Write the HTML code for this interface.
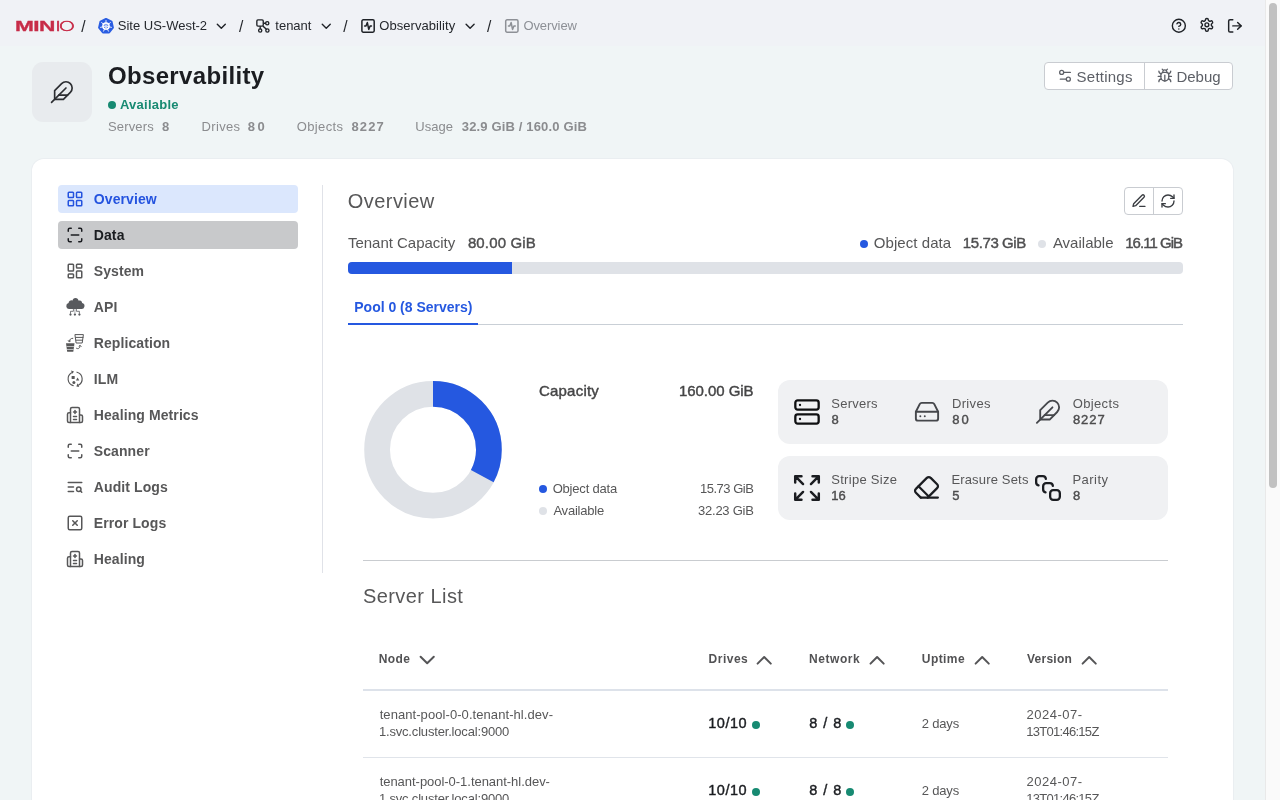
<!DOCTYPE html>
<html lang="en">
<head>
<meta charset="utf-8">
<title>Observability - Overview</title>
<style>
*{box-sizing:border-box;margin:0;padding:0}
html,body{width:1280px;height:800px;overflow:hidden}
body{background:#f0f5f6;font-family:"Liberation Sans",Arial,sans-serif;color:#1f2227;position:relative;font-size:13px}
.abs{position:absolute}
.t{position:absolute;white-space:pre}
svg{position:absolute;overflow:visible}
.k{fill:none;stroke:#1f2227;stroke-width:1.5;stroke-linecap:round;stroke-linejoin:round}
.g{fill:none;stroke:#55585e;stroke-width:1.5;stroke-linecap:round;stroke-linejoin:round}
#topbar{left:0;top:0;width:1265px;height:46px;background:#f0f2f6}
#sb{left:1265px;top:0;width:15px;height:800px;background:#fafafa;border-left:1px solid #e9e9e9}
#sbt{left:1269px;top:3px;width:8px;height:485px;border-radius:4px;background:#c1c1c1}
#hicon{left:32px;top:62px;width:60px;height:60px;border-radius:11px;background:#e8ebee}
#btns{left:1044px;top:62px;width:189px;height:28px;border:1px solid #c9ccd1;border-radius:4px;background:#fff}
#btns i{position:absolute;left:99px;top:0;width:1px;height:26px;background:#c9ccd1}
#card{left:32px;top:159px;width:1201px;height:700px;border-radius:12px;background:#fff;box-shadow:0 0 0 1px #eaeef1}
.nav{left:58px;width:240px;height:28px;border-radius:4px}
.dot{position:absolute;width:8px;height:8px;border-radius:50%}
.sc{left:778px;width:390px;height:64px;border-radius:12px;background:#f0f1f3}
.hl{position:absolute;height:1px}
.lg{color:#c72c48;transform-origin:0 0;-webkit-text-stroke:.3px #c72c48}
.lg2{-webkit-text-stroke:.55px #c72c48}
</style>
</head>
<body>
<div id="root" style="position:absolute;left:0;top:0;width:1280px;height:800px;will-change:transform">
<div id="topbar" class="abs"></div>
<div id="sb" class="abs"></div><div id="sbt" class="abs"></div>
<div id="hicon" class="abs"></div>
<div class="dot" style="left:108px;top:100.7px;background:#178a72"></div>
<div id="btns" class="abs"><i></i></div>
<div id="card" class="abs"></div>
<div class="abs nav" style="top:185px;background:#dbe7fd"></div>
<div class="abs nav" style="top:221px;background:#c8c9cb"></div>
<div class="abs" style="left:322px;top:185px;width:1px;height:388px;background:#e0e2e8"></div>

<!-- overview tools -->
<div class="abs" style="left:1124px;top:187px;width:59px;height:28px;border:1px solid #c9ccd1;border-radius:4px;background:#fff"></div>
<div class="abs" style="left:1153px;top:188px;width:1px;height:26px;background:#c9ccd1"></div>
<!-- capacity bar -->
<div class="abs" style="left:348px;top:262px;width:835px;height:12px;border-radius:4px;background:#dfe2e7"></div>
<div class="abs" style="left:348px;top:262px;width:164px;height:12px;border-radius:4px 0 0 4px;background:#2558e0"></div>
<div class="dot" style="left:860px;top:240px;background:#2558e0"></div>
<div class="dot" style="left:1038px;top:240px;background:#dfe2e7"></div>
<!-- tabs -->
<div class="hl" style="left:348px;top:324px;width:835px;background:#c9cfd6"></div>
<div class="abs" style="left:348px;top:323px;width:130px;height:2px;background:#2558e0"></div>
<!-- donut -->
<svg style="left:353px;top:370px" width="160" height="160" viewBox="353 370 160 160">
<circle cx="433" cy="449.75" r="55.9" fill="none" stroke="#dfe2e7" stroke-width="25.75"/>
<circle cx="433" cy="449.75" r="55.9" fill="none" stroke="#2558e0" stroke-width="25.75" stroke-dasharray="115.2 400" transform="rotate(-90 433 449.75)"/>
</svg>
<div class="dot" style="left:539px;top:485px;background:#2558e0"></div>
<div class="dot" style="left:539px;top:507px;background:#dfe2e7"></div>
<!-- stat cards -->
<div class="abs sc" style="top:380px"></div>
<div class="abs sc" style="top:456px"></div>
<div class="hl" style="left:363px;top:560px;width:805px;background:#c9ccd0"></div>
<!-- table -->
<div class="abs" style="left:363px;top:689px;width:805px;height:2px;background:#dde2ea"></div>
<div class="hl" style="left:363px;top:757px;width:805px;background:#e0e4ea"></div>
<div class="dot" style="left:752px;top:721px;background:#178a72"></div>
<div class="dot" style="left:846px;top:721px;background:#178a72"></div>
<div class="dot" style="left:752px;top:788px;background:#178a72"></div>
<div class="dot" style="left:846px;top:788px;background:#178a72"></div>

<!-- logo -->
<div id="logo" class="abs" title="MINIO" style="left:0;top:0;width:80px;height:46px"><span class="t lg" style="left:14.7px;top:19.1px;font-size:14.64px;line-height:14.64px;font-weight:700;letter-spacing:-.4px;transform:scaleX(1.55)">MIN</span><span class="t lg lg2" style="left:54.7px;top:19.0px;font-size:14px;line-height:14px;font-family:'DejaVu Sans',sans-serif;font-weight:200;letter-spacing:-1.85px;transform:scaleX(1.52)">IO</span></div>
<svg style="left:0;top:0" width="1" height="1"><polygon points="106.00,19.10 111.47,21.74 112.82,27.66 109.04,32.41 102.96,32.41 99.18,27.66 100.53,21.74" fill="#2a5de2" stroke="#2a5de2" stroke-width="2.2" stroke-linejoin="round"/><circle cx="106" cy="26.1" r="3.1" fill="none" stroke="#fff" stroke-width="1.5"/><line x1="106.00" y1="24.90" x2="106.00" y2="20.50" stroke="#fff" stroke-width="0.9" stroke-linecap="round"/><line x1="106.94" y1="25.35" x2="110.38" y2="22.61" stroke="#fff" stroke-width="0.9" stroke-linecap="round"/><line x1="107.17" y1="26.37" x2="111.46" y2="27.35" stroke="#fff" stroke-width="0.9" stroke-linecap="round"/><line x1="106.52" y1="27.18" x2="108.43" y2="31.15" stroke="#fff" stroke-width="0.9" stroke-linecap="round"/><line x1="105.48" y1="27.18" x2="103.57" y2="31.15" stroke="#fff" stroke-width="0.9" stroke-linecap="round"/><line x1="104.83" y1="26.37" x2="100.54" y2="27.35" stroke="#fff" stroke-width="0.9" stroke-linecap="round"/><line x1="105.06" y1="25.35" x2="101.62" y2="22.61" stroke="#fff" stroke-width="0.9" stroke-linecap="round"/><circle cx="106" cy="26.1" r="0.9" fill="#fff"/></svg>
<svg style="left:0;top:0" width="1" height="1"><g fill="none" stroke="#1f2227" stroke-width="1.35" stroke-linecap="round" stroke-linejoin="round"><rect x="256.85" y="19.8" width="6.4" height="6.25" rx="1.1"/><circle cx="267.25" cy="23.2" r="1.6"/><circle cx="260.2" cy="30.5" r="1.6"/><circle cx="267.4" cy="30.5" r="1.6"/><path d="M263.9 23.2h1.6"/><path d="M260.2 26.7v2"/><path d="M263.4 26.4l2.7 2.7"/></g></svg>
<svg style="left:0;top:0" width="1" height="1"><g transform="translate(213.30 18.25) scale(0.6667)" fill="none" stroke="#1f2227" stroke-width="2.100" stroke-linecap="round" stroke-linejoin="round"><path d="m6 9 6 6 6-6"/></g></svg>
<svg style="left:0;top:0" width="1" height="1"><g transform="translate(318.25 18.25) scale(0.6667)" fill="none" stroke="#1f2227" stroke-width="2.100" stroke-linecap="round" stroke-linejoin="round"><path d="m6 9 6 6 6-6"/></g></svg>
<svg style="left:0;top:0" width="1" height="1"><g transform="translate(462.10 18.25) scale(0.6667)" fill="none" stroke="#1f2227" stroke-width="2.100" stroke-linecap="round" stroke-linejoin="round"><path d="m6 9 6 6 6-6"/></g></svg>
<svg style="left:0;top:0" width="1" height="1"><g transform="translate(359.85 17.80) scale(0.6833)" fill="none" stroke="#1f2227" stroke-width="2.195" stroke-linecap="round" stroke-linejoin="round"><rect width="18" height="18" x="3" y="3" rx="2"/><path d="M17 12h-2l-2 5-2-10-2 5H7"/></g></svg>
<svg style="left:0;top:0" width="1" height="1"><g transform="translate(503.65 17.80) scale(0.6833)" fill="none" stroke="#8d9096" stroke-width="2.195" stroke-linecap="round" stroke-linejoin="round"><rect width="18" height="18" x="3" y="3" rx="2"/><path d="M17 12h-2l-2 5-2-10-2 5H7"/></g></svg>
<svg style="left:0;top:0" width="1" height="1"><g transform="translate(1171.05 17.95) scale(0.6500)" fill="none" stroke="#1f2227" stroke-width="2.154" stroke-linecap="round" stroke-linejoin="round"><circle cx="12" cy="12" r="10"/><path d="M9.09 9a3 3 0 0 1 5.83 1c0 2-3 3-3 3"/><path d="M12 17h.01"/></g></svg>
<svg style="left:0;top:0" width="1" height="1"><g transform="translate(1199.20 17.15) scale(0.6400)" fill="none" stroke="#1f2227" stroke-width="2.188" stroke-linecap="round" stroke-linejoin="round"><path d="M12.22 2h-.44a2 2 0 0 0-2 2v.18a2 2 0 0 1-1 1.73l-.43.25a2 2 0 0 1-2 0l-.15-.08a2 2 0 0 0-2.73.73l-.22.38a2 2 0 0 0 .73 2.73l.15.1a2 2 0 0 1 1 1.72v.51a2 2 0 0 1-1 1.74l-.15.09a2 2 0 0 0-.73 2.73l.22.38a2 2 0 0 0 2.73.73l.15-.08a2 2 0 0 1 2 0l.43.25a2 2 0 0 1 1 1.73V20a2 2 0 0 0 2 2h.44a2 2 0 0 0 2-2v-.18a2 2 0 0 1 1-1.73l.43-.25a2 2 0 0 1 2 0l.15.08a2 2 0 0 0 2.73-.73l.22-.39a2 2 0 0 0-.73-2.73l-.15-.08a2 2 0 0 1-1-1.74v-.5a2 2 0 0 1 1-1.74l.15-.09a2 2 0 0 0 .73-2.73l-.22-.38a2 2 0 0 0-2.73-.73l-.15.08a2 2 0 0 1-2 0l-.43-.25a2 2 0 0 1-1-1.73V4a2 2 0 0 0-2-2z"/><circle cx="12" cy="12" r="3"/></g></svg>
<svg style="left:0;top:0" width="1" height="1"><g transform="translate(1226.60 17.60) scale(0.6900)" fill="none" stroke="#1f2227" stroke-width="2.101" stroke-linecap="round" stroke-linejoin="round"><path d="M9 21H5a2 2 0 0 1-2-2V5a2 2 0 0 1 2-2h4"/><path d="m16 17 5-5-5-5"/><path d="M21 12H9"/></g></svg>
<svg style="left:0;top:0" width="1" height="1"><g transform="translate(49.50 79.74) scale(1.0300)" fill="none" stroke="#2b2d31" stroke-width="1.602" stroke-linecap="round" stroke-linejoin="round"><path d="M20.24 12.24a6 6 0 0 0-8.49-8.49L5 10.5V19h8.5z"/><path d="M16 8 2 22"/><path d="M17.5 15H9"/></g></svg>
<svg style="left:0;top:0" width="1" height="1"><g transform="translate(1057.00 67.80) scale(0.6667)" fill="none" stroke="#5d6067" stroke-width="1.950" stroke-linecap="round" stroke-linejoin="round"><path d="M20 7h-9"/><path d="M14 17H5"/><circle cx="17" cy="17" r="3"/><circle cx="7" cy="7" r="3"/></g></svg>
<svg style="left:0;top:0" width="1" height="1"><g transform="translate(1156.90 67.80) scale(0.6600)" fill="none" stroke="#5d6067" stroke-width="1.970" stroke-linecap="round" stroke-linejoin="round"><path d="m8 2 1.88 1.88"/><path d="M14.12 3.88 16 2"/><path d="M9 7.13v-1a3.003 3.003 0 1 1 6 0v1"/><path d="M12 20c-3.3 0-6-2.7-6-6v-3a4 4 0 0 1 4-4h4a4 4 0 0 1 4 4v3c0 3.3-2.7 6-6 6"/><path d="M12 20v-9"/><path d="M6.53 9C4.6 8.8 3 7.1 3 5"/><path d="M6 13H2"/><path d="M3 21c0-2.1 1.7-3.9 3.8-4"/><path d="M20.97 5c0 2.1-1.6 3.8-3.5 4"/><path d="M22 13h-4"/><path d="M17.2 17c2.1.1 3.8 1.9 3.8 4"/></g></svg>
<svg style="left:0;top:0" width="1" height="1"><g transform="translate(1131.00 193.00) scale(0.6667)" fill="none" stroke="#3a3d42" stroke-width="2.025" stroke-linecap="round" stroke-linejoin="round"><path d="M13 20h8"/><path d="M16.5 3.5a2.12 2.12 0 0 1 3 3L7 19l-4 1 1-4Z"/></g></svg>
<svg style="left:0;top:0" width="1" height="1"><g transform="translate(1160.00 193.00) scale(0.6667)" fill="none" stroke="#3a3d42" stroke-width="2.025" stroke-linecap="round" stroke-linejoin="round"><path d="M3 12a9 9 0 0 1 9-9 9.75 9.75 0 0 1 6.74 2.74L21 8"/><path d="M21 3v5h-5"/><path d="M21 12a9 9 0 0 1-9 9 9.75 9.75 0 0 1-6.74-2.74L3 16"/><path d="M8 16H3v5"/></g></svg>
<svg style="left:0;top:0" width="1" height="1"><g transform="translate(66.00 190.00) scale(0.7500)" fill="none" stroke="#2453df" stroke-width="2.000" stroke-linecap="round" stroke-linejoin="round"><rect width="7" height="7" x="3" y="3" rx="1"/><rect width="7" height="7" x="14" y="3" rx="1"/><rect width="7" height="7" x="14" y="14" rx="1"/><rect width="7" height="7" x="3" y="14" rx="1"/></g></svg>
<svg style="left:0;top:0" width="1" height="1"><g transform="translate(66.00 226.00) scale(0.7500)" fill="none" stroke="#1a1c20" stroke-width="2.000" stroke-linecap="round" stroke-linejoin="round"><path d="M3 7V5a2 2 0 0 1 2-2h2"/><path d="M17 3h2a2 2 0 0 1 2 2v2"/><path d="M21 17v2a2 2 0 0 1-2 2h-2"/><path d="M7 21H5a2 2 0 0 1-2-2v-2"/><path d="M7 12h10"/></g></svg>
<svg style="left:0;top:0" width="1" height="1"><g transform="translate(66.00 262.00) scale(0.7500)" fill="none" stroke="#575758" stroke-width="2.000" stroke-linecap="round" stroke-linejoin="round"><rect width="7" height="9" x="3" y="3" rx="1"/><rect width="7" height="5" x="14" y="3" rx="1"/><rect width="7" height="9" x="14" y="12" rx="1"/><rect width="7" height="5" x="3" y="16" rx="1"/></g></svg>
<svg style="left:0;top:0" width="1" height="1"><g transform="translate(66.00 406.00) scale(0.7500)" fill="none" stroke="#575758" stroke-width="2.000" stroke-linecap="round" stroke-linejoin="round"><path d="M12 6v4"/><path d="M14 14h-4"/><path d="M14 18h-4"/><path d="M14 8h-4"/><path d="M18 12h2a2 2 0 0 1 2 2v6a2 2 0 0 1-2 2H4a2 2 0 0 1-2-2v-9a2 2 0 0 1 2-2h2"/><path d="M18 22V4a2 2 0 0 0-2-2H8a2 2 0 0 0-2 2v18"/></g></svg>
<svg style="left:0;top:0" width="1" height="1"><g transform="translate(66.00 442.00) scale(0.7500)" fill="none" stroke="#575758" stroke-width="2.000" stroke-linecap="round" stroke-linejoin="round"><path d="M3 7V5a2 2 0 0 1 2-2h2"/><path d="M17 3h2a2 2 0 0 1 2 2v2"/><path d="M21 17v2a2 2 0 0 1-2 2h-2"/><path d="M7 21H5a2 2 0 0 1-2-2v-2"/><path d="M7 12h10"/></g></svg>
<svg style="left:0;top:0" width="1" height="1"><g transform="translate(66.00 478.00) scale(0.7500)" fill="none" stroke="#575758" stroke-width="2.000" stroke-linecap="round" stroke-linejoin="round"><path d="M21 6H3"/><path d="M10 12H3"/><path d="M10 18H3"/><circle cx="17" cy="15" r="3"/><path d="m21 19-1.9-1.9"/></g></svg>
<svg style="left:0;top:0" width="1" height="1"><g transform="translate(66.00 514.00) scale(0.7500)" fill="none" stroke="#575758" stroke-width="2.000" stroke-linecap="round" stroke-linejoin="round"><rect width="18" height="18" x="3" y="3" rx="2" ry="2"/><path d="m15 9-6 6"/><path d="m9 9 6 6"/></g></svg>
<svg style="left:0;top:0" width="1" height="1"><g transform="translate(66.00 550.00) scale(0.7500)" fill="none" stroke="#575758" stroke-width="2.000" stroke-linecap="round" stroke-linejoin="round"><path d="M12 6v4"/><path d="M14 14h-4"/><path d="M14 18h-4"/><path d="M14 8h-4"/><path d="M18 12h2a2 2 0 0 1 2 2v6a2 2 0 0 1-2 2H4a2 2 0 0 1-2-2v-9a2 2 0 0 1 2-2h2"/><path d="M18 22V4a2 2 0 0 0-2-2H8a2 2 0 0 0-2 2v18"/></g></svg>
<svg style="left:0;top:0" width="1" height="1"><g fill="#585a5e" stroke="none"><path d="M68.9 309 a3 3 0 0 1 -0.3 -5.9 a2.7 2.7 0 0 1 4 -2.5 a2.91 2.91 0 0 1 5.8 0 a2.7 2.7 0 0 1 3.7 2.5 a3 3 0 0 1 -1.3 5.9 z"/><circle cx="70.5" cy="314.6" r="1.15"/><circle cx="74.9" cy="314.6" r="1.15"/><circle cx="79.4" cy="314.6" r="1.15"/></g><g fill="none" stroke="#585a5e" stroke-width="0.8"><path d="M73.4 309v2.3h-2.9v2.5"/><path d="M76.4 309v2.3h3v2.5"/><path d="M74.9 309v5" stroke="#9a9c9f"/></g></svg>
<svg style="left:0;top:0" width="1" height="1"><g fill="none" stroke="#575758" stroke-width="1" stroke-linecap="round" stroke-linejoin="round"><path d="M75.3 334.6h8.1l-1.2 8.4h-5.7z"/><path d="M75.7 337.4h7.3"/><path d="M76.1 340.2h6.5"/><path d="M72.8 338.3c-2 0-3.2 1-3.6 3"/><path d="M68.3 340.6l.9 1.2 1.3-.8"/><path d="M76.5 348.3c1.8 1 3.4 .2 3.6-2.6"/><path d="M79 346.3l1.1-.9 1 1"/></g><g fill="#575758"><path d="M66 343.2h8.5l-1.2 8.6h-6.1z"/></g><g stroke="#e4e5e7" stroke-width="0.7"><path d="M66.5 346.5h7.6"/><path d="M67 349.5h6.7"/></g></svg>
<svg style="left:0;top:0" width="1" height="1"><g fill="none" stroke="#575758" stroke-width="1.15" stroke-linecap="round" stroke-linejoin="round"><path d="M73.2 385.6a7 7 0 0 1 -1.6 -12.8"/><path d="M77 372.2a7 7 0 0 1 1.3 13"/></g><g fill="#575758"><path d="M71 370.4l3 1-1.6 2.3z"/><path d="M79.2 386.9l-2.8-.5 1-3.2z"/><rect x="71.6" y="376" width="3.1" height="2.9" rx=".3"/><path d="M77.6 377.6l1.7 3h-3.4z"/><circle cx="73.9" cy="382.5" r="1.5"/></g></svg>
<svg style="left:0;top:0" width="1" height="1"><g transform="translate(793.00 398.00) scale(1.1667)" fill="none" stroke="#0f1012" stroke-width="1.971" stroke-linecap="round" stroke-linejoin="round"><rect width="20" height="8" x="2" y="2" rx="2" ry="2"/><rect width="20" height="8" x="2" y="14" rx="2" ry="2"/><path d="M6 6h.01"/><path d="M6 18h.01"/></g></svg>
<svg style="left:0;top:0" width="1" height="1"><g transform="translate(913.65 398.38) scale(1.1125)" fill="none" stroke="#45474b" stroke-width="1.708" stroke-linecap="round" stroke-linejoin="round"><path d="M22 12H2"/><path d="M5.45 5.11 2 12v6a2 2 0 0 0 2 2h16a2 2 0 0 0 2-2v-6l-3.45-6.89A2 2 0 0 0 16.76 4H7.24a2 2 0 0 0-1.79 1.11z"/><path d="M6 16h.01"/><path d="M10 16h.01"/></g></svg>
<svg style="left:0;top:0" width="1" height="1"><g transform="translate(1034.65 398.40) scale(1.1125)" fill="none" stroke="#45474b" stroke-width="1.663" stroke-linecap="round" stroke-linejoin="round"><path d="M20.24 12.24a6 6 0 0 0-8.49-8.49L5 10.5V19h8.5z"/><path d="M16 8 2 22"/><path d="M17.5 15H9"/></g></svg>
<svg style="left:0;top:0" width="1" height="1"><g transform="translate(791.27 472.27) scale(1.3111)" fill="none" stroke="#1b1d21" stroke-width="1.869" stroke-linecap="round" stroke-linejoin="round"><path d="m21 21-6-6m6 6v-4.8m0 4.8h-4.8"/><path d="M3 16.2V21m0 0h4.8M3 21l6-6"/><path d="M21 7.8V3m0 0h-4.8M21 3l-6 6"/><path d="M3 7.8V3m0 0h4.8M3 3l6 6"/></g></svg>
<svg style="left:0;top:0" width="1" height="1"><g transform="translate(912.82 473.68) scale(1.1400)" fill="none" stroke="#1b1d21" stroke-width="1.974" stroke-linecap="round" stroke-linejoin="round"><path d="m7 21-4.3-4.3c-1-1-1-2.5 0-3.4l9.6-9.6c1-1 2.5-1 3.4 0l5.6 5.6c1 1 1 2.5 0 3.4L13 21"/><path d="M22 21H7"/><path d="m5 11 9 9"/></g></svg>
<svg style="left:0;top:0" width="1" height="1"><g fill="none" stroke="#1b1d21" stroke-width="2.3" stroke-linecap="round" stroke-linejoin="round"><path d="M1045.8500000000001 478.95 A3 3 0 0 0 1042.8500000000001 476.15 H1039.15 A3 3 0 0 0 1036.15 479.15 V482.24999999999994 A3 3 0 0 0 1038.5500000000002 485.34999999999997"/><path d="M1052.8500000000001 485.95 A3 3 0 0 0 1049.8500000000001 483.15 H1046.15 A3 3 0 0 0 1043.15 486.15 V489.24999999999994 A3 3 0 0 0 1045.5500000000002 492.34999999999997"/><rect x="1050.15" y="490.15" width="9.7" height="9.7" rx="3"/></g></svg>
<svg style="left:0;top:0" width="1" height="1"><g transform="translate(414.00 646.80) scale(1.1000)" fill="none" stroke="#555557" stroke-width="1.818" stroke-linecap="round" stroke-linejoin="round"><path d="m6 9 6 6 6-6"/></g></svg>
<svg style="left:0;top:0" width="1" height="1"><g transform="translate(751.00 647.10) scale(1.1000)" fill="none" stroke="#555557" stroke-width="1.818" stroke-linecap="round" stroke-linejoin="round"><path d="m18 15-6-6-6 6"/></g></svg>
<svg style="left:0;top:0" width="1" height="1"><g transform="translate(863.90 647.10) scale(1.1000)" fill="none" stroke="#555557" stroke-width="1.818" stroke-linecap="round" stroke-linejoin="round"><path d="m18 15-6-6-6 6"/></g></svg>
<svg style="left:0;top:0" width="1" height="1"><g transform="translate(969.00 647.10) scale(1.1000)" fill="none" stroke="#555557" stroke-width="1.818" stroke-linecap="round" stroke-linejoin="round"><path d="m18 15-6-6-6 6"/></g></svg>
<svg style="left:0;top:0" width="1" height="1"><g transform="translate(1076.00 647.10) scale(1.1000)" fill="none" stroke="#555557" stroke-width="1.818" stroke-linecap="round" stroke-linejoin="round"><path d="m18 15-6-6-6 6"/></g></svg>
<div class="t" style="left:117.75px;top:19.1px;font-size:13px;line-height:13px;font-weight:400;color:#25282d;">Site US-West-2</div>
<div class="t" style="left:275.35px;top:19.1px;font-size:13px;line-height:13px;font-weight:400;color:#25282d;letter-spacing:-0.030px;">tenant</div>
<div class="t" style="left:379.25px;top:19.1px;font-size:13px;line-height:13px;font-weight:400;color:#25282d;letter-spacing:0.062px;">Observability</div>
<div class="t" style="left:523.45px;top:19.1px;font-size:13px;line-height:13px;font-weight:400;color:#8d9096;letter-spacing:-0.100px;">Overview</div>
<div class="t" style="left:81.30px;top:19.0px;font-size:15.6px;line-height:15.6px;font-weight:400;color:#25282d;">/</div>
<div class="t" style="left:239.00px;top:19.0px;font-size:15.6px;line-height:15.6px;font-weight:400;color:#25282d;">/</div>
<div class="t" style="left:343.20px;top:19.0px;font-size:15.6px;line-height:15.6px;font-weight:400;color:#25282d;">/</div>
<div class="t" style="left:487.10px;top:19.0px;font-size:15.6px;line-height:15.6px;font-weight:400;color:#25282d;">/</div>
<div class="t" style="left:107.90px;top:64.0px;font-size:24px;line-height:24px;font-weight:700;color:#1b1d21;letter-spacing:0.354px;">Observability</div>
<div class="t" style="left:119.95px;top:98.1px;font-size:13px;line-height:13px;font-weight:700;color:#178a72;letter-spacing:0.250px;">Available</div>
<div class="t" style="left:107.95px;top:120.1px;font-size:13px;line-height:13px;font-weight:400;color:#8b8c8f;letter-spacing:0.167px;">Servers</div>
<div class="t" style="left:162.00px;top:120.1px;font-size:13px;line-height:13px;font-weight:700;color:#8b8c8f;">8</div>
<div class="t" style="left:201.50px;top:120.1px;font-size:13px;line-height:13px;font-weight:400;color:#8b8c8f;letter-spacing:0.350px;">Drives</div>
<div class="t" style="left:247.70px;top:120.1px;font-size:13px;line-height:13px;font-weight:700;color:#8b8c8f;letter-spacing:2.500px;">80</div>
<div class="t" style="left:296.75px;top:120.1px;font-size:13px;line-height:13px;font-weight:400;color:#8b8c8f;letter-spacing:0.375px;">Objects</div>
<div class="t" style="left:351.50px;top:120.1px;font-size:13px;line-height:13px;font-weight:700;color:#8b8c8f;letter-spacing:1.083px;">8227</div>
<div class="t" style="left:415.20px;top:120.1px;font-size:13px;line-height:13px;font-weight:400;color:#8b8c8f;letter-spacing:0.075px;">Usage</div>
<div class="t" style="left:461.75px;top:120.1px;font-size:13px;line-height:13px;font-weight:700;color:#8b8c8f;letter-spacing:0.155px;">32.9 GiB / 160.0 GiB</div>
<div class="t" style="left:1076.55px;top:68.7px;font-size:15px;line-height:15px;font-weight:400;color:#5d6067;letter-spacing:0.243px;">Settings</div>
<div class="t" style="left:1176.55px;top:68.7px;font-size:15px;line-height:15px;font-weight:400;color:#5d6067;letter-spacing:-0.050px;">Debug</div>
<div class="t" style="left:93.80px;top:192.4px;font-size:14px;line-height:14px;font-weight:700;color:#2453df;letter-spacing:.09px;">Overview</div>
<div class="t" style="left:93.80px;top:228.4px;font-size:14px;line-height:14px;font-weight:700;color:#1a1c20;letter-spacing:.09px;">Data</div>
<div class="t" style="left:93.80px;top:264.4px;font-size:14px;line-height:14px;font-weight:700;color:#575758;letter-spacing:.09px;">System</div>
<div class="t" style="left:93.80px;top:300.4px;font-size:14px;line-height:14px;font-weight:700;color:#575758;letter-spacing:.09px;">API</div>
<div class="t" style="left:93.80px;top:336.4px;font-size:14px;line-height:14px;font-weight:700;color:#575758;letter-spacing:.09px;">Replication</div>
<div class="t" style="left:93.80px;top:372.4px;font-size:14px;line-height:14px;font-weight:700;color:#575758;letter-spacing:.09px;">ILM</div>
<div class="t" style="left:93.80px;top:408.4px;font-size:14px;line-height:14px;font-weight:700;color:#575758;letter-spacing:.09px;">Healing Metrics</div>
<div class="t" style="left:93.80px;top:444.4px;font-size:14px;line-height:14px;font-weight:700;color:#575758;letter-spacing:.09px;">Scanner</div>
<div class="t" style="left:93.80px;top:480.4px;font-size:14px;line-height:14px;font-weight:700;color:#575758;letter-spacing:.09px;">Audit Logs</div>
<div class="t" style="left:93.80px;top:516.4px;font-size:14px;line-height:14px;font-weight:700;color:#575758;letter-spacing:.09px;">Error Logs</div>
<div class="t" style="left:93.80px;top:552.4px;font-size:14px;line-height:14px;font-weight:700;color:#575758;letter-spacing:.09px;">Healing</div>
<div class="t" style="left:347.80px;top:190.5px;font-size:20px;line-height:20px;font-weight:400;color:#575758;letter-spacing:0.436px;">Overview</div>
<div class="t" style="left:347.95px;top:235.0px;font-size:15px;line-height:15px;font-weight:400;color:#575758;letter-spacing:-0.018px;">Tenant Capacity</div>
<div class="t" style="left:467.90px;top:235.2px;font-size:15px;line-height:15px;font-weight:400;color:#4f4f50;letter-spacing:0.137px;-webkit-text-stroke:.42px;">80.00 GiB</div>
<div class="t" style="left:873.85px;top:235.0px;font-size:15px;line-height:15px;font-weight:400;color:#575758;letter-spacing:0.060px;">Object data</div>
<div class="t" style="left:962.80px;top:235.2px;font-size:15px;line-height:15px;font-weight:400;color:#4f4f50;letter-spacing:-0.400px;-webkit-text-stroke:.42px;">15.73 GiB</div>
<div class="t" style="left:1052.90px;top:235.0px;font-size:15px;line-height:15px;font-weight:400;color:#575758;">Available</div>
<div class="t" style="left:1125.20px;top:235.2px;font-size:15px;line-height:15px;font-weight:400;color:#4f4f50;letter-spacing:-0.963px;-webkit-text-stroke:.42px;">16.11 GiB</div>
<div class="t" style="left:354.30px;top:300.3px;font-size:14px;line-height:14px;font-weight:700;color:#2558e0;letter-spacing:-0.012px;">Pool 0 (8 Servers)</div>
<div class="t" style="left:538.90px;top:383.0px;font-size:15px;line-height:15px;font-weight:400;color:#454546;letter-spacing:0.229px;-webkit-text-stroke:.42px;">Capacity</div>
<div class="t" style="left:679.00px;top:382.7px;font-size:15px;line-height:15px;font-weight:400;color:#454546;letter-spacing:-0.056px;-webkit-text-stroke:.42px;">160.00 GiB</div>
<div class="t" style="left:552.65px;top:482.4px;font-size:13px;line-height:13px;font-weight:400;color:#575758;letter-spacing:-0.195px;">Object data</div>
<div class="t" style="left:700.00px;top:482.4px;font-size:13px;line-height:13px;font-weight:400;color:#575758;letter-spacing:-0.500px;">15.73 GiB</div>
<div class="t" style="left:553.40px;top:504.4px;font-size:13px;line-height:13px;font-weight:400;color:#575758;letter-spacing:-0.225px;">Available</div>
<div class="t" style="left:698.10px;top:504.4px;font-size:13px;line-height:13px;font-weight:400;color:#575758;letter-spacing:-0.263px;">32.23 GiB</div>
<div class="t" style="left:831.25px;top:396.8px;font-size:13px;line-height:13px;font-weight:400;color:#575758;letter-spacing:0.250px;">Servers</div>
<div class="t" style="left:831.50px;top:412.9px;font-size:13px;line-height:13px;font-weight:400;color:#4c4c4d;-webkit-text-stroke:.4px;">8</div>
<div class="t" style="left:951.90px;top:396.8px;font-size:13px;line-height:13px;font-weight:400;color:#575758;letter-spacing:0.350px;">Drives</div>
<div class="t" style="left:952.30px;top:412.9px;font-size:13px;line-height:13px;font-weight:400;color:#4c4c4d;letter-spacing:1.850px;-webkit-text-stroke:.4px;">80</div>
<div class="t" style="left:1072.65px;top:396.8px;font-size:13px;line-height:13px;font-weight:400;color:#575758;letter-spacing:0.375px;">Objects</div>
<div class="t" style="left:1072.90px;top:412.9px;font-size:13px;line-height:13px;font-weight:400;color:#4c4c4d;letter-spacing:1.000px;-webkit-text-stroke:.4px;">8227</div>
<div class="t" style="left:831.25px;top:472.8px;font-size:13px;line-height:13px;font-weight:400;color:#575758;letter-spacing:0.290px;">Stripe Size</div>
<div class="t" style="left:831.25px;top:488.8px;font-size:13px;line-height:13px;font-weight:400;color:#4c4c4d;-webkit-text-stroke:.4px;">16</div>
<div class="t" style="left:951.40px;top:472.8px;font-size:13px;line-height:13px;font-weight:400;color:#575758;letter-spacing:0.168px;">Erasure Sets</div>
<div class="t" style="left:952.15px;top:488.8px;font-size:13px;line-height:13px;font-weight:400;color:#4c4c4d;-webkit-text-stroke:.4px;">5</div>
<div class="t" style="left:1072.40px;top:472.8px;font-size:13px;line-height:13px;font-weight:400;color:#575758;letter-spacing:0.470px;">Parity</div>
<div class="t" style="left:1072.90px;top:488.8px;font-size:13px;line-height:13px;font-weight:400;color:#4c4c4d;-webkit-text-stroke:.4px;">8</div>
<div class="t" style="left:362.90px;top:585.9px;font-size:20px;line-height:20px;font-weight:400;color:#575758;letter-spacing:0.440px;">Server List</div>
<div class="t" style="left:378.75px;top:653.1px;font-size:12px;line-height:12px;font-weight:700;color:#525254;letter-spacing:0.417px;">Node</div>
<div class="t" style="left:708.55px;top:653.1px;font-size:12px;line-height:12px;font-weight:700;color:#525254;letter-spacing:0.500px;">Drives</div>
<div class="t" style="left:809.05px;top:653.1px;font-size:12px;line-height:12px;font-weight:700;color:#525254;letter-spacing:0.550px;">Network</div>
<div class="t" style="left:921.85px;top:653.1px;font-size:12px;line-height:12px;font-weight:700;color:#525254;letter-spacing:0.420px;">Uptime</div>
<div class="t" style="left:1026.95px;top:653.1px;font-size:12px;line-height:12px;font-weight:700;color:#525254;letter-spacing:0.258px;">Version</div>
<div class="t" style="left:379.65px;top:708.2px;font-size:13px;line-height:13px;font-weight:400;color:#575758;letter-spacing:0.072px;">tenant-pool-0-0.tenant-hl.dev-</div>
<div class="t" style="left:378.90px;top:725.3px;font-size:13px;line-height:13px;font-weight:400;color:#575758;letter-spacing:-0.174px;">1.svc.cluster.local:9000</div>
<div class="t" style="left:708.30px;top:716.2px;font-size:14.5px;line-height:14.5px;font-weight:400;color:#1b1d21;letter-spacing:0.500px;-webkit-text-stroke:.4px;">10/10</div>
<div class="t" style="left:809.30px;top:716.2px;font-size:14.5px;line-height:14.5px;font-weight:400;color:#1b1d21;letter-spacing:0.938px;-webkit-text-stroke:.4px;">8 / 8</div>
<div class="t" style="left:921.85px;top:717.0px;font-size:13px;line-height:13px;font-weight:400;color:#575758;letter-spacing:-0.200px;">2 days</div>
<div class="t" style="left:1026.45px;top:707.6px;font-size:13px;line-height:13px;font-weight:400;color:#575758;letter-spacing:0.521px;">2024-07-</div>
<div class="t" style="left:1026.20px;top:724.6px;font-size:13px;line-height:13px;font-weight:400;color:#575758;letter-spacing:-0.709px;">13T01:46:15Z</div>
<div class="t" style="left:379.65px;top:775.2px;font-size:13px;line-height:13px;font-weight:400;color:#575758;letter-spacing:-0.034px;">tenant-pool-0-1.tenant-hl.dev-</div>
<div class="t" style="left:378.90px;top:792.3px;font-size:13px;line-height:13px;font-weight:400;color:#575758;letter-spacing:-0.174px;">1.svc.cluster.local:9000</div>
<div class="t" style="left:708.30px;top:783.2px;font-size:14.5px;line-height:14.5px;font-weight:400;color:#1b1d21;letter-spacing:0.500px;-webkit-text-stroke:.4px;">10/10</div>
<div class="t" style="left:809.30px;top:783.2px;font-size:14.5px;line-height:14.5px;font-weight:400;color:#1b1d21;letter-spacing:0.938px;-webkit-text-stroke:.4px;">8 / 8</div>
<div class="t" style="left:921.85px;top:784.0px;font-size:13px;line-height:13px;font-weight:400;color:#575758;letter-spacing:-0.200px;">2 days</div>
<div class="t" style="left:1026.45px;top:774.6px;font-size:13px;line-height:13px;font-weight:400;color:#575758;letter-spacing:0.521px;">2024-07-</div>
<div class="t" style="left:1026.20px;top:791.6px;font-size:13px;line-height:13px;font-weight:400;color:#575758;letter-spacing:-0.709px;">13T01:46:15Z</div>
</div>
</body>
</html>
